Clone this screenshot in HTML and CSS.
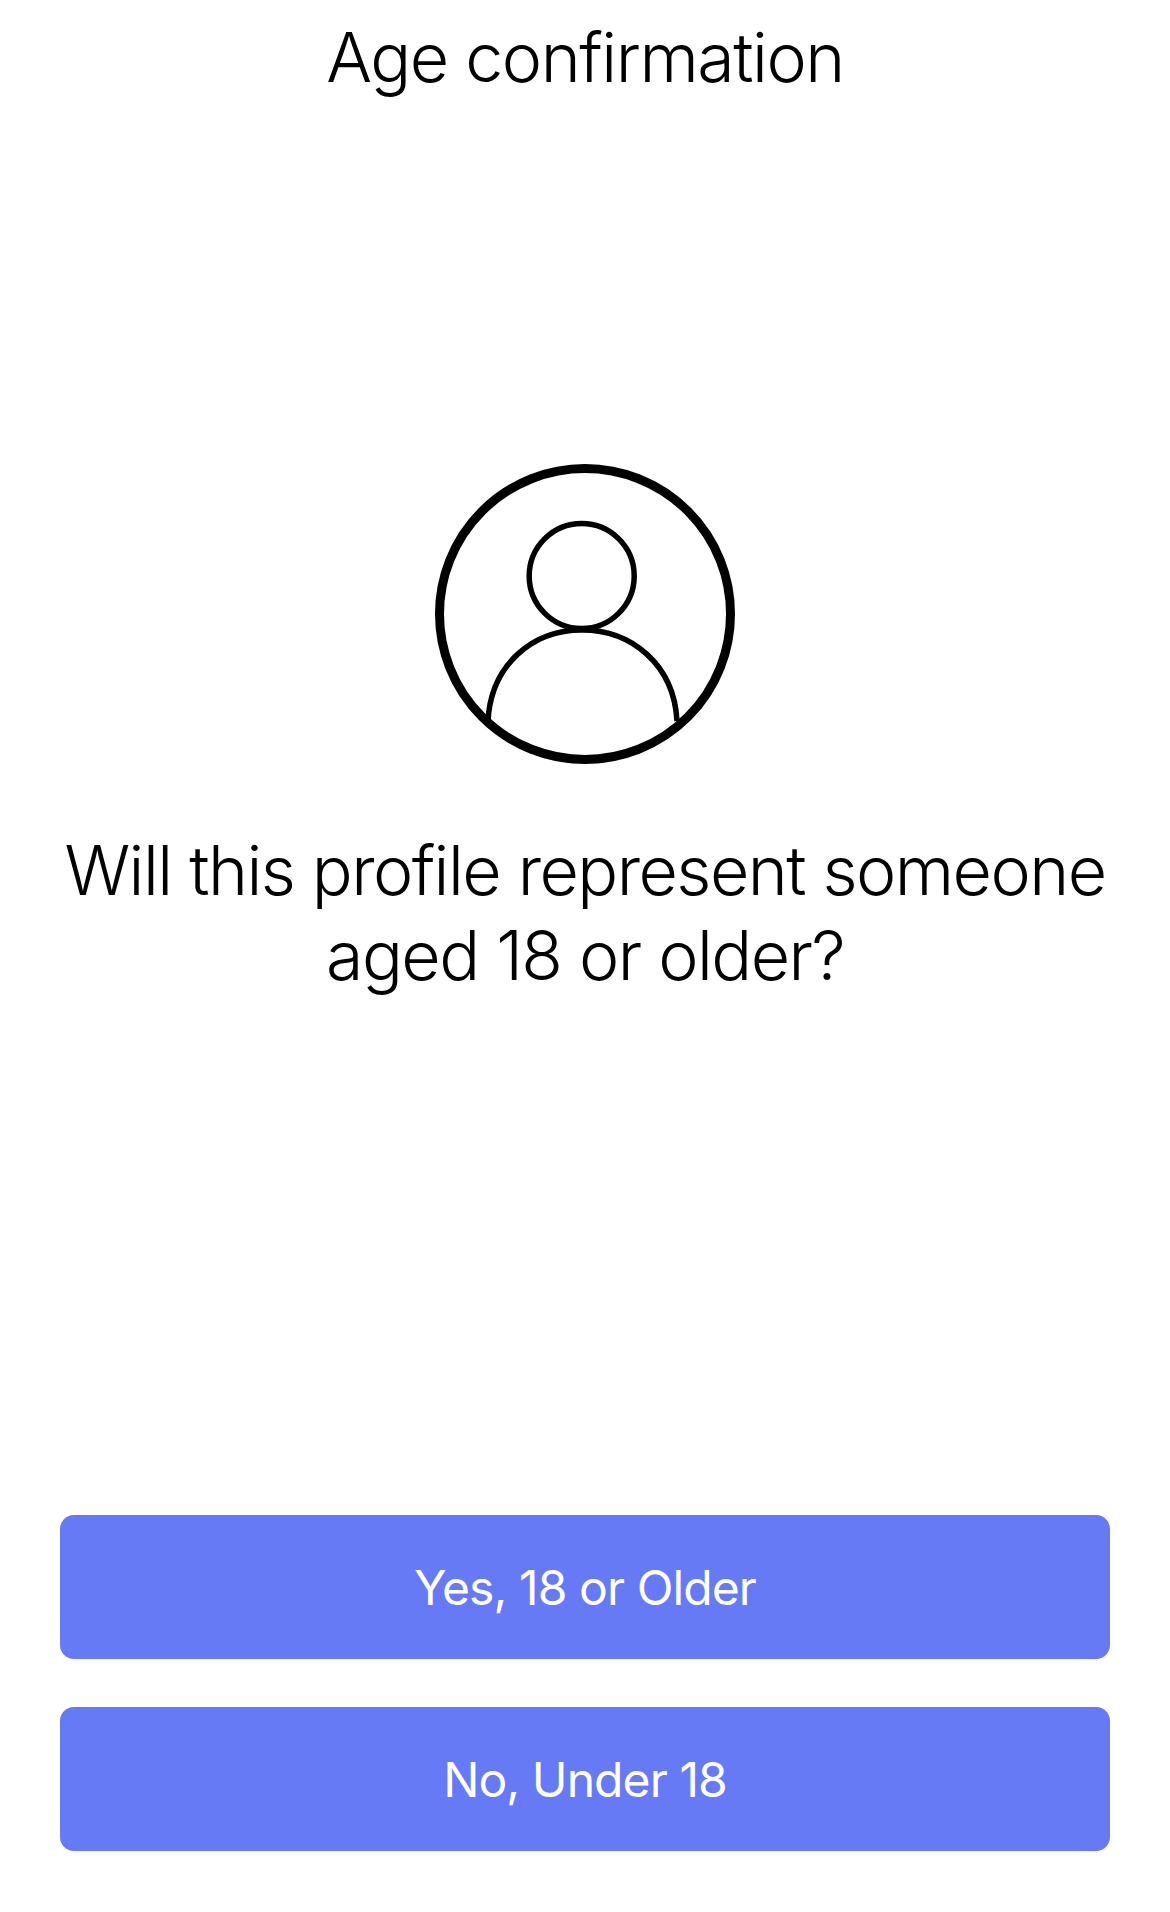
FILE: index.html
```html
<!DOCTYPE html>
<html lang="en">
<head>
  <meta charset="UTF-8" />
  <title>Age confirmation</title>
  <link rel="stylesheet" href="styles.css">
</head>
<body>
  <div class="page">
    <h1 class="title">Age confirmation</h1>

    <div class="middle">
      <svg class="avatar" width="300" height="300" viewBox="0 0 300 300" fill="none" stroke="#000">
        <circle cx="150" cy="150" r="145.5" stroke-width="9"/>
        <circle cx="146.7" cy="112" r="52.5" stroke-width="5.5"/>
        <path d="M53 257 C56 200 98 166 147 166 C196 166 239 200 242 257" stroke-width="5.5"/>
      </svg>
      <p class="question">Will this profile represent someone<br>aged 18 or older?</p>
    </div>

    <div class="actions">
      <button class="btn">Yes, 18 or Older</button>
      <button class="btn">No, Under 18</button>
    </div>
  </div>
</body>
</html>
```

FILE: styles.css
```css
body {
  margin: 0;
  background: #fff;
  color: #000;
  font-family: Inter, "Liberation Sans", sans-serif;
}

.page {
  height: 1912px;
  box-sizing: border-box;
  padding: 0 60px 61px;
  display: flex;
  flex-direction: column;
}

.title {
  margin: 17px 0 0;
  font-size: 68px;
  line-height: 80px;
  font-weight: 300;
  letter-spacing: -1.45px;
  text-align: center;
}

.middle {
  flex: 1;
  display: flex;
  flex-direction: column;
  align-items: center;
  padding-top: 367px;
}

.avatar {
  flex: none;
}

.question {
  margin: 64px -20px 0;
  font-size: 68px;
  line-height: 85px;
  font-weight: 300;
  letter-spacing: -1.55px;
  text-align: center;
}

.actions {
  display: flex;
  flex-direction: column;
  gap: 48px;
}

.btn {
  height: 144px;
  border: none;
  border-radius: 14px;
  background: #677af5;
  color: #fff;
  font-family: inherit;
  font-size: 48px;
  font-weight: 400;
  letter-spacing: -0.9px;
}
```
